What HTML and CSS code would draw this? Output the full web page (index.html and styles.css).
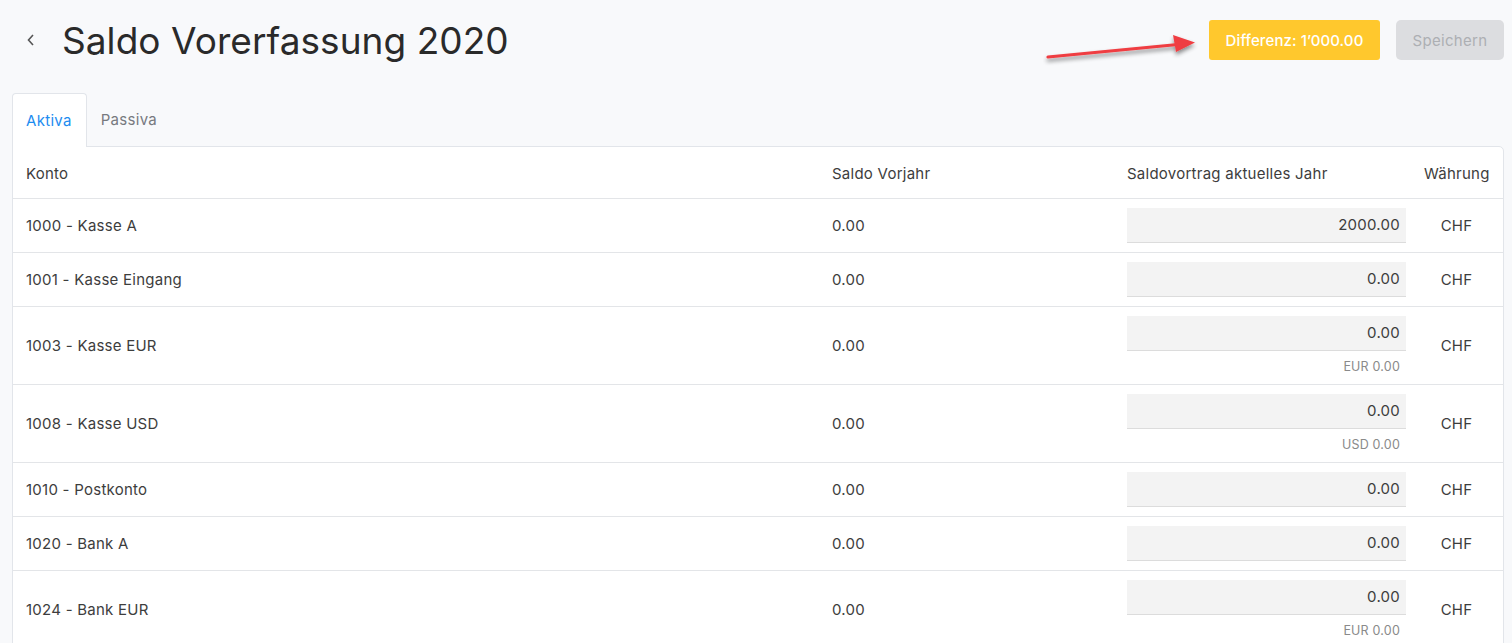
FILE: index.html
```html
<!DOCTYPE html>
<html lang="de">
<head>
    <meta charset="UTF-8">
    <title>Saldo Vorerfassung 2020</title>
    <link rel="stylesheet" href="styles.css">
</head>
<body>

<div class="page">
    <!-- Kopfzeile -->
    <div class="header">
        <div class="title-wrap">
            <a class="back" href="#">
                <svg width="10" height="14" viewBox="0 0 10 14"><path d="M7 2 L2.5 7 L7 12" fill="none" stroke="#555" stroke-width="1.6"/></svg>
            </a>
            <h1>Saldo Vorerfassung 2020</h1>
        </div>
        <div class="actions">
            <button class="btn btn-warn">Differenz: 1’000.00</button>
            <button class="btn btn-disabled" disabled>Speichern</button>
        </div>
        <!-- Markierungspfeil -->
        <svg class="arrow" width="180" height="40" viewBox="0 0 180 40">
            <defs>
                <filter id="sh" x="-10%" y="-50%" width="120%" height="200%">
                    <feDropShadow dx="0" dy="3" stdDeviation="2" flood-color="#000" flood-opacity="0.45"/>
                </filter>
            </defs>
            <g filter="url(#sh)">
                <path d="M5 27 L140 14" stroke="#ef3e42" stroke-width="3.2" stroke-linecap="round"/>
                <path d="M130 5 L152 12.5 L133 22 Z" fill="#ef3e42"/>
            </g>
        </svg>
    </div>

    <!-- Tabs -->
    <div class="tabs">
        <div class="tab active">Aktiva</div>
        <div class="tab">Passiva</div>
    </div>

    <div class="card">
        <table class="saldo-table">
            <colgroup>
                <col class="c-konto">
                <col class="c-vorjahr">
                <col class="c-saldo">
                <col class="c-waehrung">
            </colgroup>
            <thead>
                <tr>
                    <th>Konto</th>
                    <th>Saldo Vorjahr</th>
                    <th>Saldovortrag aktuelles Jahr</th>
                    <th class="cur-head">Währung</th>
                </tr>
            </thead>
            <tbody>
                <tr>
                    <td>1000 - Kasse A</td>
                    <td>0.00</td>
                    <td class="in-cell"><input class="amount" value="2000.00"></td>
                    <td class="cur">CHF</td>
                </tr>
                <tr>
                    <td>1001 - Kasse Eingang</td>
                    <td>0.00</td>
                    <td class="in-cell"><input class="amount" value="0.00"></td>
                    <td class="cur">CHF</td>
                </tr>
                <tr>
                    <td>1003 - Kasse EUR</td>
                    <td>0.00</td>
                    <td class="in-cell"><input class="amount" value="0.00"><div class="fx">EUR 0.00</div></td>
                    <td class="cur">CHF</td>
                </tr>
                <tr>
                    <td>1008 - Kasse USD</td>
                    <td>0.00</td>
                    <td class="in-cell"><input class="amount" value="0.00"><div class="fx">USD 0.00</div></td>
                    <td class="cur">CHF</td>
                </tr>
                <tr>
                    <td>1010 - Postkonto</td>
                    <td>0.00</td>
                    <td class="in-cell"><input class="amount" value="0.00"></td>
                    <td class="cur">CHF</td>
                </tr>
                <tr>
                    <td>1020 - Bank A</td>
                    <td>0.00</td>
                    <td class="in-cell"><input class="amount" value="0.00"></td>
                    <td class="cur">CHF</td>
                </tr>
                <tr>
                    <td>1024 - Bank EUR</td>
                    <td>0.00</td>
                    <td class="in-cell"><input class="amount" value="0.00"><div class="fx">EUR 0.00</div></td>
                    <td class="cur">CHF</td>
                </tr>
            </tbody>
        </table>
    </div>
</div>

</body>
</html>
```

FILE: styles.css
```css
body {
    margin: 0;
    font-family: Inter, "Noto Sans", sans-serif;
    background-color: #f8f9fb;
    color: #3d3d3d;
}

.page {
    padding: 20px 8px 0 12px;
}

.header {
    position: relative;
    display: flex;
    justify-content: space-between;
    align-items: center;
    height: 40px;
}

.title-wrap {
    display: flex;
    align-items: center;
}

.back {
    display: flex;
    width: 50px;
    padding-left: 14px;
    box-sizing: border-box;
}

h1 {
    margin: 0;
    font-size: 37px;
    font-weight: 400;
    color: #2a2a2a;
    letter-spacing: 0.05px;
}

.actions {
    display: flex;
    gap: 16px;
}

.btn {
    height: 40px;
    border: none;
    border-radius: 3px;
    font-family: Inter, sans-serif;
    font-size: 15px;
    padding: 0;
}

.btn-warn {
    width: 171px;
    background-color: #ffc82d;
    color: #fff;
    font-weight: 500;
    letter-spacing: 0.1px;
}

.btn-disabled {
    width: 108px;
    background-color: #dcdde0;
    color: #adafb3;
    border-radius: 5px;
    letter-spacing: 0.3px;
}

.arrow {
    position: absolute;
    left: 1031px;
    top: 10px;
}

.tabs {
    display: flex;
    margin-top: 33px;
}

.tab {
    height: 53px;
    line-height: 53px;
    padding: 0 14px;
    font-size: 15px;
    color: #777a7f;
    letter-spacing: 0.3px;
    box-sizing: border-box;
}

.tab.active {
    color: #1d8cf0;
    background-color: #fff;
    border: 1px solid #e2e5ea;
    border-bottom: none;
    border-radius: 4px 4px 0 0;
    height: 54px;
    margin-bottom: -1px;
    padding-left: 13px;
    position: relative;
}

.card {
    background-color: #fff;
    border: 1px solid #e2e5ea;
    border-radius: 0 5px 0 0;
}

.saldo-table {
    width: 100%;
    border-collapse: collapse;
    table-layout: fixed;
    font-size: 15px;
    letter-spacing: 0.25px;
}

.c-konto { width: 805px; }
.c-vorjahr { width: 295px; }
.c-saldo { width: 293px; }
.c-waehrung { width: 97px; }

.saldo-table th {
    text-align: left;
    font-weight: 400;
    height: 51px;
    padding: 2px 14px 0 13px;
    border-bottom: 1px solid #e3e5e8;
    box-sizing: border-box;
}

.saldo-table th:nth-child(2),
.saldo-table th:nth-child(3),
.saldo-table td:nth-child(2) {
    padding-left: 14px;
}

.saldo-table th.cur-head {
    padding: 2px 0 0 18px;
}

.saldo-table td {
    height: 54px;
    padding: 0 14px 0 13px;
    border-bottom: 1px solid #e3e5e8;
    box-sizing: border-box;
}

.saldo-table td.in-cell {
    padding: 9px 0 9px 14px;
}

.saldo-table td.cur {
    text-align: center;
    padding: 0 0 0 4px;
}

.amount {
    display: block;
    width: 279px;
    height: 35px;
    box-sizing: border-box;
    border: none;
    border-bottom: 1px solid #dcdcdc;
    background-color: #f3f3f3;
    text-align: right;
    padding: 0 6px;
    font-family: Inter, sans-serif;
    font-size: 15px;
    letter-spacing: 0.25px;
    color: #3d3d3d;
}

.fx {
    width: 279px;
    box-sizing: border-box;
    text-align: right;
    padding: 0 6px;
    margin-top: 8px;
    font-size: 12.5px;
    line-height: 16px;
    letter-spacing: 0.2px;
    color: #8a8a8a;
}
```
